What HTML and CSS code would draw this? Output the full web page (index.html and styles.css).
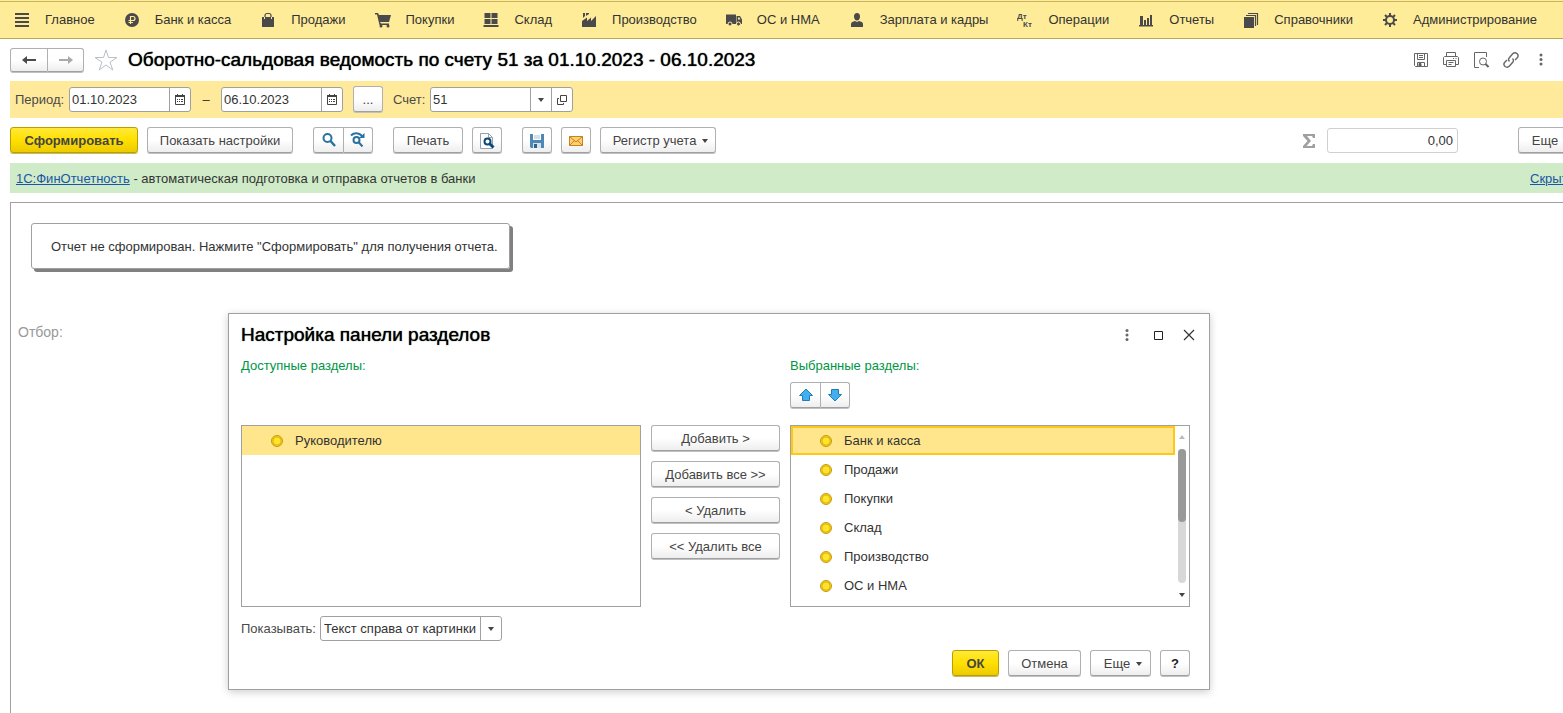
FILE: index.html
```html
<!DOCTYPE html>
<html lang="ru">
<head>
<meta charset="utf-8">
<title>Оборотно-сальдовая ведомость по счету 51</title>
<link rel="stylesheet" href="styles.css">
</head>
<body>
<div class="app">
  <nav class="sections">
    <a class="section" href="#"><svg class="ico" viewBox="0 0 16 16"><path d="M1 1h14v2H1zM1 5h14v2H1zM1 9h14v2H1zM1 13h14v2H1z"/></svg>Главное</a>
    <a class="section" href="#"><svg class="ico" viewBox="0 0 16 16"><circle cx="8" cy="8" r="7"/><path d="M6.500 12V4.500h2.500a2 2 0 0 1 0 4H4.500M4.500 10.500h4.500" fill="none" stroke="#ffec99" stroke-width="1.200"/></svg>Банк и касса</a>
    <a class="section" href="#"><svg class="ico" viewBox="0 0 16 16"><path d="M2 5h12v10H2z"/><path d="M5 7V3.500a2 2 0 0 1 2-2h2a2 2 0 0 1 2 2V7" fill="none" stroke="#4a4a4a" stroke-width="1.200"/><path d="M4.500 5v2M11.500 5v2" stroke="#ffec99"/></svg>Продажи</a>
    <a class="section" href="#"><svg class="ico" viewBox="0 0 16 16"><path d="M0 1h3l1 2h12l-2 7H5l1 1.500h8V13H4.500L2 2.500H0z"/><circle cx="6" cy="14" r="1.500"/><circle cx="13" cy="14" r="1.500"/></svg>Покупки</a>
    <a class="section" href="#"><svg class="ico" viewBox="0 0 16 16"><path d="M1.500 1h6v5h-6zM8.500 1h6v5h-6zM1.500 7h6v5h-6zM8.500 7h6v5h-6zM.5 13h15v2H.5z"/></svg>Склад</a>
    <a class="section" href="#"><svg class="ico" viewBox="0 0 16 16"><path d="M1 15V9l5-3.500V9l4-3.500V9l5-5v11zM2 1h2v3L2 6zM5 1h3v1L5 4z"/></svg>Производство</a>
    <a class="section" href="#"><svg class="ico" viewBox="0 0 16 16"><path d="M0 2.500h10V12H0zM10.500 4H14l2 3.500V12h-5.500z"/><path d="M12 5.500h1.500l1 2H12z" fill="#ffec99"/><circle cx="4" cy="12" r="2" stroke="#ffec99"/><circle cx="12.500" cy="12" r="2" stroke="#ffec99"/></svg>ОС и НМА</a>
    <a class="section" href="#"><svg class="ico" viewBox="0 0 16 16"><path d="M8 1c2 0 3 1.500 3 3.500S10 8.500 8 8.500 5 6.500 5 4.500 6 1 8 1zM2 15v-3c0-2 2-2.500 4-3l2 1 2-1c2 .5 4 1 4 3v3z"/></svg>Зарплата и кадры</a>
    <a class="section" href="#"><svg class="ico" viewBox="0 0 16 16"><text class="ico-text" x="0" y="7">Дт</text><text class="ico-text" x="6" y="15">Кт</text></svg>Операции</a>
    <a class="section" href="#"><svg class="ico" viewBox="0 0 16 16"><path d="M2 4h3v9H2zM6 8h2v5H6zM9 6h2v7H9zM12 3h2v10h-2zM1 13h14v1.500H1z"/></svg>Отчеты</a>
    <a class="section" href="#"><svg class="ico" viewBox="0 0 16 16"><path d="M1 5h10v11H1z"/><path d="M3 3.500h9.500V14M5 1.500h9.500V13" fill="none" stroke="#4a4a4a" stroke-width="1.200"/></svg>Справочники</a>
    <a class="section" href="#"><svg class="ico" viewBox="0 0 16 16"><circle cx="8" cy="8" r="4" fill="none" stroke="#4a4a4a" stroke-width="2"/><path d="M8 1v3M8 12v3M1 8h3M12 8h3M3 3l2 2M11 11l2 2M3 13l2-2M11 5l2-2" stroke="#4a4a4a" stroke-width="2"/></svg>Администрирование</a>
  </nav>

  <header class="titlebar">
    <div class="group nav-group">
      <button class="btn" type="button" aria-label="Назад"><svg class="ico" viewBox="0 0 16 16"><path d="M1 8l5-4v3h9v2H6v3z"/></svg></button>
      <button class="btn" type="button" aria-label="Вперед"><svg class="ico pale" viewBox="0 0 16 16"><path d="M15 8l-5-4v3H1v2h9v3z"/></svg></button>
    </div>
    <svg class="star" viewBox="0 0 24 24"><path d="M12 2l2.500 7.500H23l-7 4.700 2.800 7.800L12 17l-6.800 5L8 14.200 1 9.500h8.500z"/></svg>
    <h1 class="title">Оборотно-сальдовая ведомость по счету 51 за 01.10.2023 - 06.10.2023</h1>
    <div class="tools">
      <button class="tool" type="button" aria-label="Сохранить"><svg class="ico line" viewBox="0 0 16 16"><path d="M1.500 1.500h13v13h-12l-1-1zM4.500 1.500v6h7v-6M6 3.500h4M6 5.500h4M4.500 14.500v-4h7v4"/><path d="M6 11.500h2v3H6z" fill="#555"/></svg></button>
      <button class="tool" type="button" aria-label="Печать"><svg class="ico line" viewBox="0 0 16 16"><path d="M3.500 4.500v-4h9v4M3.500 12.500h-3v-7l1-1h13l1 1v7h-3M3.500 8.500h9v6h-9zM5.500 10.500h5M5.500 12.500h3M10 6.500h1M12.500 6.500h1"/></svg></button>
      <button class="tool" type="button" aria-label="Просмотр"><svg class="ico line" viewBox="0 0 16 16"><path d="M6 15.500H1.500V.5h12V5"/><circle cx="10" cy="9.500" r="3.500"/><path d="M12.500 12l3 3" stroke-width="2"/></svg></button>
      <button class="tool" type="button" aria-label="Ссылка"><svg class="ico line" viewBox="0 0 16 16"><path d="M6.500 9.500c-1.500-1.500-1-3 0-4l3-3.500c1.500-1.500 3-1.500 4.500-.5 1.500 1.500 1.500 3 0 4.500l-2 2M9.500 6.500c1.500 1.500 1 3 0 4l-3 3.500c-1.500 1.500-3 1.500-4.500.5-1.500-1.500-1.500-3 0-4.500l2-2" stroke-width="1.400"/></svg></button>
      <button class="tool" type="button" aria-label="Меню"><svg class="ico dots" viewBox="0 0 16 16"><circle cx="8" cy="3" r="1.500"/><circle cx="8" cy="7.500" r="1.500"/><circle cx="8" cy="12" r="1.500"/></svg></button>
    </div>
  </header>

  <div class="filters">
    <label for="from">Период:</label>
    <div class="field date"><input id="from" type="text" value="01.10.2023"><button type="button" aria-label="Календарь"><svg class="cal" viewBox="0 0 12 12"><path d="M1.500 1.500h9v9h-9z" fill="none" stroke="#444"/><path d="M1 1h10v2H1zM3 0h1v2H3zM8 0h1v2H8zM3 5h1v1H3zM5 5h1v1H5zM7 5h2v1H7zM3 7h1v1H3zM5 7h1v1H5zM7 7h2v1H7z"/></svg></button></div>
    <span class="dash">–</span>
    <div class="field date"><input type="text" value="06.10.2023" aria-label="Конец периода"><button type="button" aria-label="Календарь"><svg class="cal" viewBox="0 0 12 12"><path d="M1.500 1.500h9v9h-9z" fill="none" stroke="#444"/><path d="M1 1h10v2H1zM3 0h1v2H3zM8 0h1v2H8zM3 5h1v1H3zM5 5h1v1H5zM7 5h2v1H7zM3 7h1v1H3zM5 7h1v1H5zM7 7h2v1H7z"/></svg></button></div>
    <button class="btn square" type="button">...</button>
    <label class="account-label" for="account">Счет:</label>
    <div class="field account"><input id="account" type="text" value="51"><button type="button" aria-label="Выбрать"><svg class="arrow" viewBox="0 0 6 4"><path d="M0 0h6L3 4z"/></svg></button><button type="button" aria-label="Открыть"><svg class="cal" viewBox="0 0 12 12"><path d="M4.500 1.500h6v6h-6zM3 4.500H1.500v6h6V9" fill="none" stroke="#444"/></svg></button></div>
  </div>

  <div class="toolbar">
    <button class="btn primary generate" type="button">Сформировать</button>
    <button class="btn settings" type="button">Показать настройки</button>
    <div class="group spaced">
      <button class="btn" type="button" aria-label="Найти"><svg class="ico blue" viewBox="0 0 16 16"><circle cx="6.500" cy="6" r="4"/><path d="M9.500 9l4.500 5" stroke-width="2.500"/></svg></button>
      <button class="btn" type="button" aria-label="Найти далее"><svg class="ico blue" viewBox="0 0 16 16"><circle cx="6.500" cy="8" r="3"/><path d="M8.500 10l4 4.500M1 3.500c3-3 8-3 11 .5"/><path d="M14.500 1v5H9z" fill="#2a72a0" stroke="none"/></svg></button>
    </div>
    <button class="btn print spaced" type="button">Печать</button>
    <button class="btn square" type="button" aria-label="Предварительный просмотр"><svg class="ico" viewBox="0 0 16 16"><path d="M1.500.5h8l4 4v11h-12z" fill="#fff" stroke="#8fa3b5"/><path d="M9.500.5v4h4" fill="none" stroke="#8fa3b5"/><circle cx="8.500" cy="8.500" r="3" fill="#fff" stroke="#0d4775" stroke-width="2"/><path d="M10.500 10.500l4 4" stroke="#0d4775" stroke-width="3"/></svg></button>
    <button class="btn square spaced" type="button" aria-label="Сохранить"><svg class="ico" viewBox="0 0 16 16"><path d="M1 1h14v14H2l-1-1z" fill="#4f87b5"/><path d="M4 1h8v6H4z" fill="#fff"/><path d="M5 3h6M5 5h6" stroke="#a8c0d4"/><path d="M4 10h8v5H4z" fill="#d5e2ec"/><path d="M5 11h3v4H5z" fill="#2f638c"/></svg></button>
    <button class="btn square" type="button" aria-label="Отправить"><svg class="ico" viewBox="0 0 16 16"><path d="M1.500 3.500h13v9h-13z" fill="#ffd070" stroke="#c8811d"/><path d="M1.500 3.500L8 9l6.500-5.500M1.500 12.500l5-5M14.500 12.500l-5-5" fill="none" stroke="#c8811d"/></svg></button>
    <button class="btn menu register" type="button">Регистр учета <svg class="arrow" viewBox="0 0 6 4"><path d="M0 0h6L3 4z"/></svg></button>
    <svg class="sigma" viewBox="0 0 12 14"><path d="M0 0h12v4h-2L9 2H4l4 5-4.500 5H9l1-2h2v4H0v-2l4.500-5L0 2z"/></svg>
    <input class="sum" type="text" value="0,00" aria-label="Сумма">
    <button class="btn menu more" type="button">Еще <svg class="arrow" viewBox="0 0 6 4"><path d="M0 0h6L3 4z"/></svg></button>
  </div>

  <div class="notice"><span><a href="#">1С:ФинОтчетность</a> - автоматическая подготовка и отправка отчетов в банки</span><a class="hide" href="#">Скрыть</a></div>

  <main class="report">
    <p class="message">Отчет не сформирован. Нажмите "Сформировать" для получения отчета.</p>
    <p class="selection">Отбор:</p>
  </main>

  <section class="dialog" role="dialog" aria-labelledby="dialog-title">
    <header class="dialog-head">
      <h2 class="title" id="dialog-title">Настройка панели разделов</h2>
      <div class="window-tools">
        <button class="tool" type="button" aria-label="Меню"><svg class="ico dots" viewBox="0 0 16 16"><circle cx="8" cy="3.500" r="1.500"/><circle cx="8" cy="8" r="1.500"/><circle cx="8" cy="12.500" r="1.500"/></svg></button>
        <button class="tool" type="button" aria-label="Развернуть"><svg class="ico" viewBox="0 0 16 16"><path d="M4.500 4.500h8v8h-8z" fill="none" stroke="#222"/></svg></button>
        <button class="tool" type="button" aria-label="Закрыть"><svg class="ico" viewBox="0 0 16 16"><path d="M3 3l10 10M13 3L3 13" stroke="#333" stroke-width="1.200"/></svg></button>
      </div>
    </header>
    <div class="picker">
      <h3 class="caption">Доступные разделы:</h3>
      <h3 class="caption chosen-col">Выбранные разделы:</h3>
      <div class="group order chosen-col">
        <button class="btn" type="button" aria-label="Выше"><svg class="ico move" viewBox="0 0 16 16"><path d="M8 2l6.500 6.500H11.500v5h-7v-5H1.500z"/></svg></button>
        <button class="btn" type="button" aria-label="Ниже"><svg class="ico move" viewBox="0 0 16 16"><path d="M8 14l6.500-6.500H11.500v-5h-7v5H1.500z"/></svg></button>
      </div>
      <ul class="list">
        <li class="item selected"><span class="coin"></span>Руководителю</li>
      </ul>
      <div class="actions">
        <button class="btn" type="button">Добавить &gt;</button>
        <button class="btn" type="button">Добавить все &gt;&gt;</button>
        <button class="btn" type="button">&lt; Удалить</button>
        <button class="btn" type="button">&lt;&lt; Удалить все</button>
      </div>
      <div class="list scrollable">
        <ul class="items">
          <li class="item selected focused"><span class="coin"></span>Банк и касса</li>
          <li class="item"><span class="coin"></span>Продажи</li>
          <li class="item"><span class="coin"></span>Покупки</li>
          <li class="item"><span class="coin"></span>Склад</li>
          <li class="item"><span class="coin"></span>Производство</li>
          <li class="item"><span class="coin"></span>ОС и НМА</li>
        </ul>
        <div class="scroll">
          <svg class="arrow up" viewBox="0 0 6 4"><path d="M0 4h6L3 0z"/></svg>
          <div class="track"><div class="thumb"></div></div>
          <svg class="arrow" viewBox="0 0 6 4"><path d="M0 0h6L3 4z"/></svg>
        </div>
      </div>
    </div>
    <div class="display">
      <label for="display">Показывать:</label>
      <div class="field combo"><select id="display"><option>Текст справа от картинки</option></select><span class="drop"><svg class="arrow" viewBox="0 0 6 4"><path d="M0 0h6L3 4z"/></svg></span></div>
    </div>
    <footer class="dialog-foot">
      <button class="btn primary ok" type="button">ОК</button>
      <button class="btn cancel" type="button">Отмена</button>
      <button class="btn menu extra" type="button">Еще <svg class="arrow" viewBox="0 0 6 4"><path d="M0 0h6L3 4z"/></svg></button>
      <button class="btn square help" type="button">?</button>
    </footer>
  </section>
</div>
</body>
</html>
```
FILE: styles.css
```css
* { box-sizing: border-box; }

body {
  margin: 0;
  background: #fff;
  color: #333;
  font: 13px/16px "Liberation Sans", Arial, sans-serif;
}

button, input, select { font: inherit; color: inherit; }
h1, h2, h3, p, ul { margin: 0; padding: 0; }

.app {
  position: relative;
  display: flex;
  flex-direction: column;
  min-height: 100vh;
  overflow: hidden;
}

.ico { width: 16px; height: 16px; fill: #4a4a4a; flex: none; }
.ico-text { font: bold 8px "Liberation Sans", Arial, sans-serif; }
.pale { fill: #aaa; }
.line { fill: none; stroke: #666; }
.dots { fill: #666; }
.blue { fill: none; stroke: #2a72a0; stroke-width: 2; }
.move { fill: #40b0f0; stroke: #267cb0; }
.arrow { width: 6px; height: 4px; fill: #444; flex: none; }
.cal { width: 12px; height: 12px; fill: #444; }

.sections {
  display: flex;
  justify-content: space-between;
  align-items: center;
  height: 39px;
  padding: 2px 26px 0 14px;
  background: linear-gradient(#ffec99 1px, #c8b45e 1px, #c8b45e 2px, #ffec99 2px);
  border-bottom: 1px solid #b8a858;
}
.section {
  display: flex;
  align-items: center;
  gap: 15px;
  color: #333;
  text-decoration: none;
  white-space: nowrap;
}

.titlebar {
  display: flex;
  align-items: center;
  height: 42px;
  padding: 0 14px 0 10px;
}
.title {
  color: #000;
  font-size: 19px;
  line-height: 22px;
  font-weight: 400;
  text-shadow: 0 0 1px #000;
  white-space: nowrap;
}
.star { width: 24px; height: 24px; margin: 0 10px; fill: #fff; stroke: #b8c0c8; }
.tools { display: flex; gap: 14px; margin-left: auto; }
.tool {
  display: flex;
  padding: 0;
  border: 0;
  background: none;
}

.btn {
  display: flex;
  align-items: center;
  justify-content: center;
  gap: 5px;
  height: 26px;
  margin-bottom: 1px;
  padding: 1px 0 0;
  border: 1px solid #b0b0b0;
  border-bottom-color: #a0a0a0;
  border-radius: 3px;
  background: linear-gradient(#fff 50%, #eee);
  box-shadow: 0 1px 0 #c0c0c0;
  color: #444;
  white-space: nowrap;
}
.primary {
  border-color: #b89f00;
  background: linear-gradient(#ffe938, #ffe000 50%, #eccb00);
  box-shadow: 0 1px 0 #c8b860;
  font-weight: 700;
}
.menu { gap: 6px; padding-left: 5px; }
.square { width: 30px; }
.group { display: flex; }
.group .btn { width: 30px; padding: 0; }
.group .btn:first-child { width: 31px; border-radius: 3px 0 0 3px; }
.group .btn:last-child { border-left: 0; border-radius: 0 3px 3px 0; width: 29px; }
.nav-group .btn { height: 24px; }
.nav-group .btn:first-child { width: 38px; }
.nav-group .btn:last-child { width: 36px; }

.filters {
  display: flex;
  align-items: center;
  height: 37px;
  margin-left: 10px;
  padding-left: 5px;
  background: #ffe99a;
}
.filters label { width: 54px; color: #4a4a4a; }
.filters .account-label { width: 37px; margin-left: 10px; }
.field {
  display: flex;
  height: 25px;
  border: 1px solid #a0a0a0;
  border-radius: 3px;
  background: #fff;
  overflow: hidden;
}
.field input { flex: 1; min-width: 0; padding: 0 2px; border: 0; background: none; outline: 0; }
.field button, .drop {
  display: flex;
  align-items: center;
  justify-content: center;
  width: 21px;
  padding: 0;
  border: 0;
  border-left: 1px solid #a0a0a0;
  background: none;
}
.date { width: 122px; }
.account { width: 143px; }
.dash { width: 30px; text-align: center; }
.filters .square { margin-left: 10px; }

.toolbar {
  display: flex;
  align-items: center;
  gap: 9px;
  height: 45px;
  margin-right: -16px;
  padding-left: 10px;
}
.spaced { margin-left: 11px; }
.generate { width: 128px; }
.settings { width: 146px; }
.print { width: 70px; }
.register { width: 116px; }
.sigma { width: 12px; height: 14px; margin-left: auto; fill: #a0a0a0; }
.sum {
  width: 131px;
  height: 25px;
  margin-left: 3px;
  padding: 0 4px;
  border: 1px solid #d0d0d0;
  border-radius: 3px;
  text-align: right;
}
.more { width: 61px; margin-left: 51px; }

.notice {
  display: flex;
  align-items: center;
  justify-content: space-between;
  height: 30px;
  margin: 0 -12px 9px 10px;
  padding: 1px 0 0 6px;
  background: #cfebc7;
  white-space: nowrap;
}
.notice a { color: #1a55a8; }
.notice .hide { width: 45px; }

.report {
  flex: 1;
  margin-left: 10px;
  padding: 20px 0 0 7px;
  border: solid #a0a0a0;
  border-width: 1px 0 0 1px;
}
.message {
  width: fit-content;
  margin-left: 13px;
  padding: 15px 11px 13px 19px;
  border: 1px solid #a0a0a0;
  border-radius: 3px;
  box-shadow: 3px 3px 0 #808080;
}
.selection { margin-top: 55px; color: #999; font-size: 14px; }

.dialog {
  position: absolute;
  top: 313px;
  left: 228px;
  width: 982px;
  padding: 10px 19px 12px 12px;
  border: 1px solid #a0a0a0;
  background: #fff;
  box-shadow: 0 2px 8px rgba(0, 0, 0, .2);
}
.dialog-head { display: flex; align-items: center; justify-content: space-between; margin-bottom: 12px; }
.window-tools { display: flex; gap: 15px; margin-right: -7px; }

.picker {
  display: grid;
  grid-template-columns: 400px 129px 400px;
  column-gap: 10px;
}
.caption { color: #009646; font-size: 13px; font-weight: 400; }
.chosen-col { grid-column: 3; }
.order { margin: 8px 0 16px; }
.list {
  height: 182px;
  border: 1px solid #a0a0a0;
  list-style: none;
}
.items { flex: 1; list-style: none; }
.item {
  display: flex;
  align-items: center;
  gap: 12px;
  height: 29px;
  padding-left: 29px;
  color: #333;
}
.coin {
  width: 12px;
  height: 12px;
  border: 1px solid #c49a0c;
  border-radius: 50%;
  background: radial-gradient(circle, #ffe628 3px, #dfb010 4px, #ffd520 5px);
}
.selected { background: #ffe68c; }
.focused { padding-left: 27px; border: 2px solid #ffc814; }
.scrollable { display: flex; }
.scroll {
  display: flex;
  flex-direction: column;
  align-items: center;
  justify-content: space-between;
  width: 14px;
  padding: 9px 0;
}
.up { fill: #bbb; }
.track { width: 8px; height: 134px; border-radius: 4px; background: #d8d8d8; }
.thumb { height: 73px; border-radius: 4px; background: #999; }
.actions { display: flex; flex-direction: column; gap: 9px; }

.display { display: flex; align-items: center; margin-top: 9px; }
.display label { width: 79px; color: #4a4a4a; }
.combo { width: 182px; }
.combo select {
  flex: 1;
  min-width: 0;
  padding: 0 3px;
  border: 0;
  background: none;
  appearance: none;
}

.dialog-foot { display: flex; justify-content: flex-end; gap: 9px; margin-top: 9px; }
.ok { width: 47px; }
.cancel { width: 73px; }
.extra { width: 61px; }
.help { color: #222; font-weight: 700; }
```
